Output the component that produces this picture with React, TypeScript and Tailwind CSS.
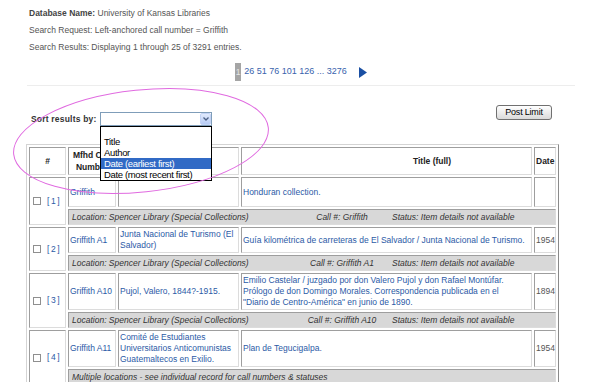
import React from "react";

type Row = {
  n: number;
  call: string;
  author: string[];
  title: string[];
  date: string;
  h: string;
  loc: string;
  callno?: string;
  status?: string;
};

const rows: Row[] = [
  {
    n: 1,
    call: "Griffith",
    author: [],
    title: ["Honduran collection."],
    date: "",
    h: "h-[30px]",
    loc: "Location: Spencer Library (Special Collections)",
    callno: "Call #: Griffith",
    status: "Status: Item details not available",
  },
  {
    n: 2,
    call: "Griffith A1",
    author: ["Junta Nacional de Turismo (El", "Salvador)"],
    title: ["Guía kilométrica de carreteras de El Salvador / Junta Nacional de Turismo."],
    date: "1954",
    h: "h-[26px]",
    loc: "Location: Spencer Library (Special Collections)",
    callno: "Call #: Griffith A1",
    status: "Status: Item details not available",
  },
  {
    n: 3,
    call: "Griffith A10",
    author: ["Pujol, Valero, 1844?-1915."],
    title: [
      "Emilio Castelar / juzgado por don Valero Pujol y don Rafael Montúfar.",
      "Prólogo de don Domingo Morales. Correspondencia publicada en el",
      "\"Diario de Centro-América\" en junio de 1890.",
    ],
    date: "1894",
    h: "h-[37px]",
    loc: "Location: Spencer Library (Special Collections)",
    callno: "Call #: Griffith A10",
    status: "Status: Item details not available",
  },
  {
    n: 4,
    call: "Griffith A11",
    author: ["Comité de Estudiantes", "Universitarios Anticomunistas", "Guatemaltecos en Exilio."],
    title: ["Plan de Tegucigalpa."],
    date: "1954",
    h: "h-[36px]",
    loc: "Multiple locations - see individual record for call numbers & statuses",
  },
];

const cell =
  "border border-t-[#9e9e9e] border-l-[#9e9e9e] border-r-[#dcdcdc] border-b-[#dcdcdc] p-[1px] align-middle";

export default function App() {
  return (
    <div className="relative w-[602px] h-[382px] overflow-hidden bg-white font-['Liberation_Sans',Arial,sans-serif] text-[8.5px] text-[#555]">
      {/* header info */}
      <div className="h-[63px] pt-[5px] pl-[29px] leading-[17px]">
        <div>
          <span className="font-bold text-[#444]">Database Name:</span> University of Kansas Libraries
        </div>
        <div>Search Request: Left-anchored call number = Griffith</div>
        <div>Search Results: Displaying 1 through 25 of 3291 entries.</div>
      </div>

      {/* pagination */}
      <div className="h-[18px] flex items-center justify-center">
        <span className="w-[6px] h-[18px] bg-[#a5a5a5] text-[#e6e6e6] flex items-center justify-center">1</span>
        <span className="ml-[3px] text-[9px] text-[#3a63ad]">26 51 76 101 126 ... 3276</span>
        <svg className="ml-[12px]" width="8" height="11" viewBox="0 0 8 11">
          <path d="M0 0 L8 5.5 L0 11 Z" fill="#1a4fa3" />
        </svg>
      </div>
      <div className="mt-[4px] mx-[27px] h-px bg-[#ededed]" />

      {/* sort row */}
      <div className="mt-[19px] flex items-start justify-between pl-[31px] pr-[50px]">
        <div className="mt-[7px] flex items-center">
          <span className="w-[69px] font-bold text-[#333] tracking-[0.2px]">Sort results by:</span>
          <div className="relative w-[112px] h-[14px] border border-[#7f9db9] bg-white">
            <div className="absolute right-[0px] top-[0px] w-[11px] h-[12px] rounded-[2px] border border-[#c3d3f5] bg-linear-to-b from-[#e2ebfd] to-[#b7cbf4] flex items-center justify-center">
              <svg width="6" height="4" viewBox="0 0 6 4">
                <path d="M0.5 0.5 L3 3 L5.5 0.5" stroke="#4d6185" strokeWidth="1.3" fill="none" />
              </svg>
            </div>
            <div className="absolute left-[-1px] top-[13px] w-[112px] border border-black bg-white text-black text-[9.5px] tracking-[-0.35px] z-10">
              <div className="h-[9px]" />
              <div className="h-[11px] leading-[11px] pl-[3px]">Title</div>
              <div className="h-[11px] leading-[11px] pl-[3px]">Author</div>
              <div className="h-[11px] leading-[11px] pl-[3px] bg-[#316ac5] text-white">Date (earliest first)</div>
              <div className="h-[11px] leading-[11px] pl-[3px]">Date (most recent first)</div>
            </div>
          </div>
        </div>
        <button className="w-[56px] h-[15px] rounded-[3px] border border-[#707070] bg-linear-to-b from-white to-[#dadada] text-[9px] leading-[13px] text-black tracking-[-0.2px]">
          Post Limit
        </button>
      </div>

      {/* results table */}
      <table className="mt-[18px] ml-[26px] w-[533px] table-fixed border-separate border-spacing-[2px] border border-t-[#d4d4d4] border-l-[#d4d4d4] border-r-[#8a8a8a] border-b-[#8a8a8a] leading-[11px]">
        <thead>
          <tr className="h-[25px]">
            <th className={`${cell} w-[37px] text-center font-bold text-[#222]`}>#</th>
            <th className={`${cell} w-[48px] text-center font-bold text-[#222] leading-[12px]`}>
              Mfhd Call
              <br />
              Number
            </th>
            <th className={`${cell} w-[121px] text-center font-bold text-[#222]`}>Author</th>
            <th className={`${cell} w-[291px] text-center font-bold text-[#222] pl-[92px]`}>Title (full)</th>
            <th className={`${cell} w-[22px] text-center font-bold text-[#222]`}>Date</th>
          </tr>
        </thead>
        <tbody>
          {rows.map((r) => (
            <React.Fragment key={r.n}>
              <tr className={r.h}>
                <td rowSpan={2} className={`${cell} pl-[3px]`}>
                  <div className="flex items-center">
                    <span className="inline-block w-[8px] h-[8px] border border-[#8f8f8f] bg-white" />
                    <span className="ml-[6px] text-[#2b5aa6] tracking-[-0.4px]">[ {r.n} ]</span>
                  </div>
                </td>
                <td className={`${cell} text-[#2b5aa6]`}>{r.call}</td>
                <td className={`${cell} text-[#2b5aa6]`}>
                  {r.author.map((a, i) => (
                    <div key={i}>{a}</div>
                  ))}
                </td>
                <td className={`${cell} text-[#2b5aa6] whitespace-nowrap`}>
                  {r.title.map((t, i) => (
                    <div key={i}>{t}</div>
                  ))}
                </td>
                <td className={`${cell} text-[#555]`}>{r.date}</td>
              </tr>
              <tr className="h-[16px]">
                <td colSpan={4} className={`${cell} bg-[#d8d8d8] italic text-[#333] pl-[3px]`}>
                  <div className="flex whitespace-nowrap">
                    <span className="w-[222px] shrink-0">{r.loc}</span>
                    {r.callno && <span className="w-[96px] shrink-0 text-center">{r.callno}</span>}
                    {r.status && <span className="pl-[2px]">{r.status}</span>}
                  </div>
                </td>
              </tr>
            </React.Fragment>
          ))}
        </tbody>
      </table>

      {/* highlight ellipse */}
      <svg className="absolute left-0 top-0 pointer-events-none z-20" width="602" height="382">
        <ellipse cx="141" cy="141" rx="128" ry="51" transform="rotate(-6 141 141)" fill="none" stroke="#e06ae0" strokeWidth="1" />
      </svg>
    </div>
  );
}
